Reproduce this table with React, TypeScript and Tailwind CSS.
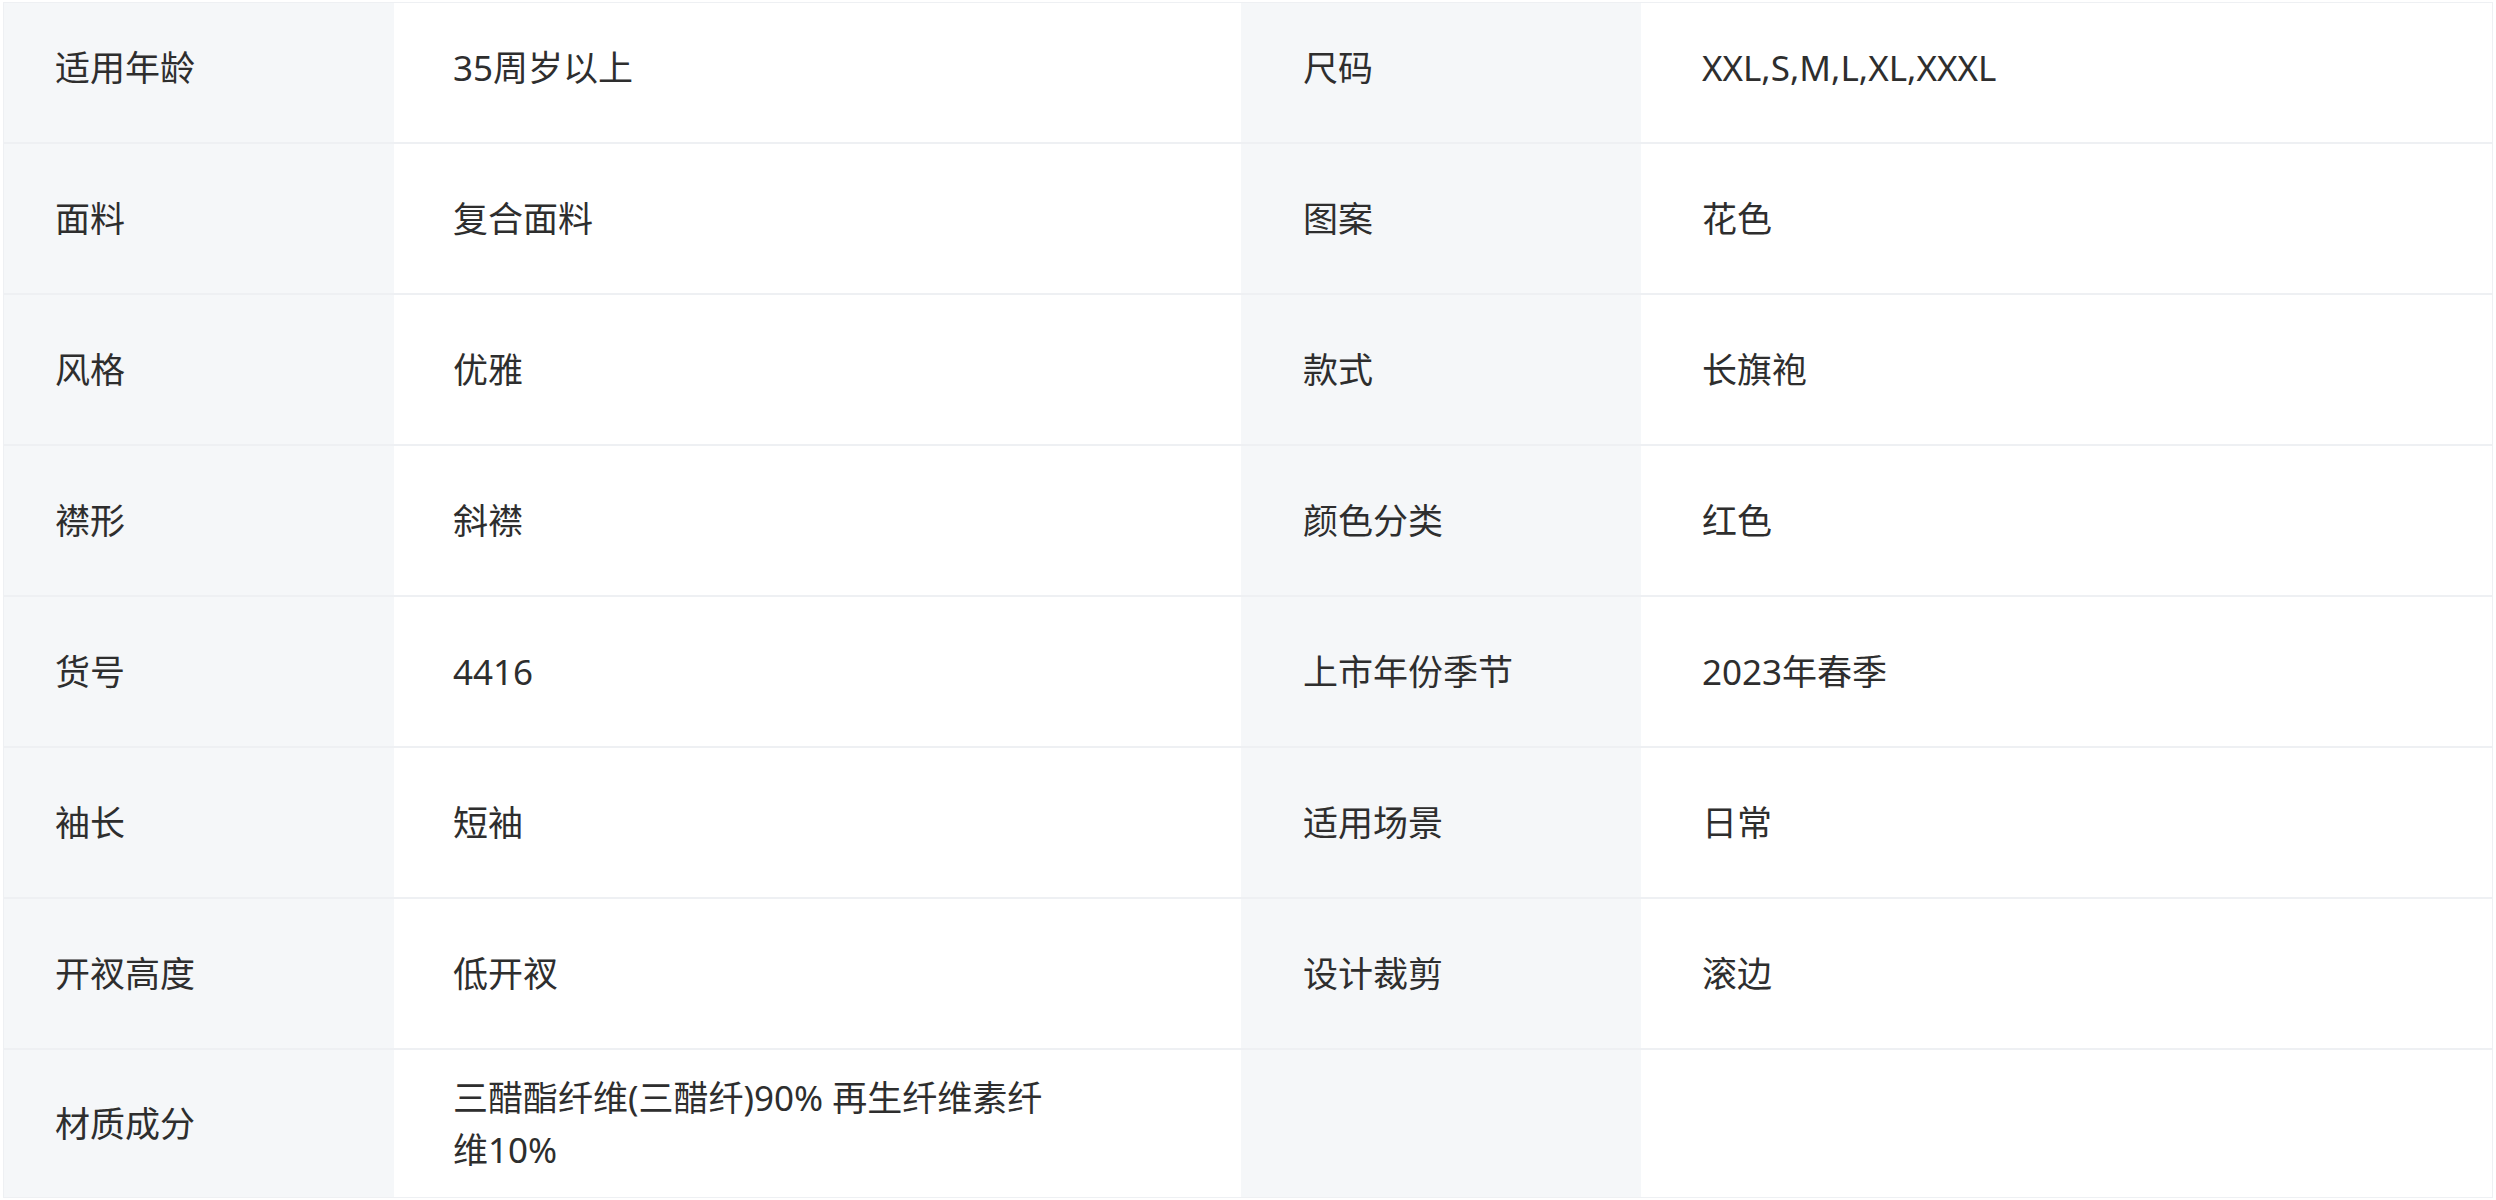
import React from "react";

const rows: [string, React.ReactNode, string, string][] = [
  ["适用年龄", "35周岁以上", "尺码", "XXL,S,M,L,XL,XXXL"],
  ["面料", "复合面料", "图案", "花色"],
  ["风格", "优雅", "款式", "长旗袍"],
  ["襟形", "斜襟", "颜色分类", "红色"],
  ["货号", "4416", "上市年份季节", "2023年春季"],
  ["袖长", "短袖", "适用场景", "日常"],
  ["开衩高度", "低开衩", "设计裁剪", "滚边"],
  [
    "材质成分",
    <>
      三醋酯纤维(三醋纤)90% 再生纤维素纤
      <br />
      维10%
    </>,
    "",
    "",
  ],
];

export default function App() {
  return (
    <div
      className="bg-white w-[2496px] h-[1200px] pt-[2px] text-[#2e2e2e]"
      style={{ fontFamily: '"Noto Sans", "Noto Sans CJK SC", sans-serif' }}
    >
      <div className="ml-[3px] w-[2490px] border border-[#eef0f3] grid grid-cols-[390px_847px_400px_851px] text-[35px] leading-[52px]">
        {rows.map((r, i) => {
          const first = i === 0;
          const last = i === rows.length - 1;
          const h = first
            ? "h-[141px] pb-[10px] border-b-2"
            : last
            ? "h-[147px]"
            : "h-[151px] border-b-2";
          return (
            <React.Fragment key={i}>
              <div className={`${h} border-[#eef0f3] bg-[#f5f7f9] flex items-center pl-[51px]`}>{r[0]}</div>
              <div className={`${h} border-[#eef0f3] bg-white flex items-center pl-[59px]`}>
                <div>{r[1]}</div>
              </div>
              <div className={`${h} border-[#eef0f3] bg-[#f5f7f9] flex items-center pl-[62px]`}>{r[2]}</div>
              <div className={`${h} border-[#eef0f3] bg-white flex items-center pl-[61px]`}>{r[3]}</div>
            </React.Fragment>
          );
        })}
      </div>
    </div>
  );
}
